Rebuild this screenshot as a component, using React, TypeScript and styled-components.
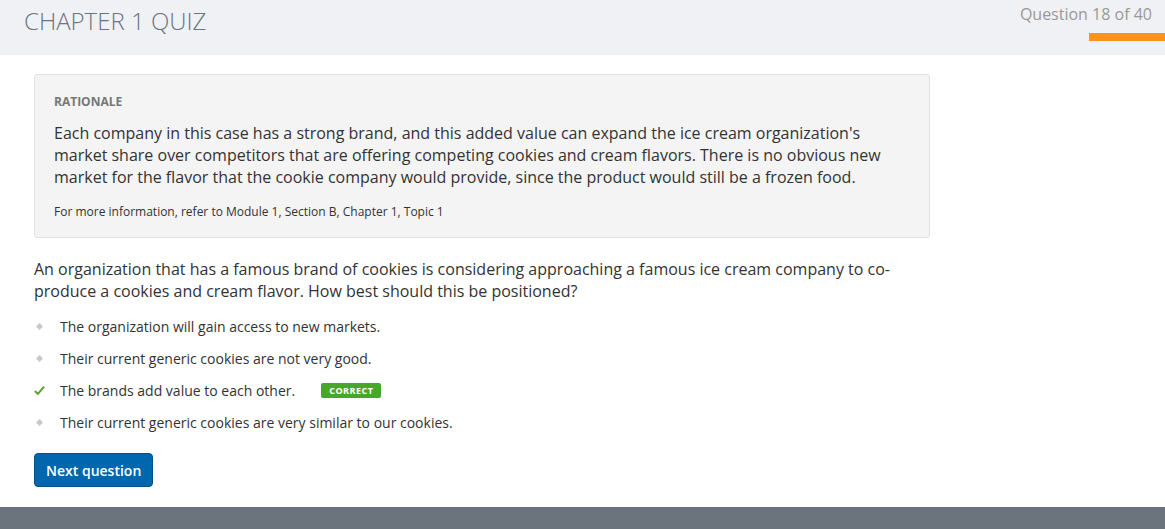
import React from "react"
import styled, { createGlobalStyle } from "styled-components"

const GlobalStyle = createGlobalStyle`
  html, body {
    margin: 0;
    padding: 0;
    background: #fff;
    font-family: "Open Sans", "Liberation Sans", sans-serif;
    color: #333;
  }
`

const Page = styled.div`
  display: flex;
  flex-direction: column;
  min-height: 529px;
`

const Header = styled.header`
  background-color: #f0f1f5;
  display: flex;
  height: 55px;
  justify-content: space-between;
  padding-left: 24px;
`

const Title = styled.h1`
  color: #6a7580;
  font-size: 24px;
  font-weight: 300;
  line-height: 1;
  margin: 9px 0 0;
`

const Progress = styled.div`
  align-items: flex-end;
  display: flex;
  flex-direction: column;
  padding-top: 3px;
`

const Counter = styled.span`
  color: #999;
  font-size: 16px;
  margin-right: 13px;
`

const ProgressBar = styled.div`
  background-color: #f7931e;
  height: 8px;
  margin-top: 8px;
  width: 76px;
`

const Main = styled.main`
  flex: 1;
  padding: 19px 34px 17px;
  width: 896px;
`

const Rationale = styled.section`
  background-color: #f4f4f4;
  border: 1px solid #e2e2e2;
  border-radius: 3px;
  padding: 19px 19px 17px;
`

const Label = styled.h3`
  color: #777;
  font-size: 12px;
  font-weight: 700;
  line-height: 16px;
  margin: 0 0 12px;
`

const Paragraph = styled.p`
  color: #333;
  font-size: 16px;
  line-height: 22px;
  margin: 0 0 16px;
`

const Note = styled.p`
  color: #333;
  font-size: 12px;
  line-height: 16px;
  margin: 0;
`

const Question = styled.p`
  font-size: 16px;
  line-height: 22px;
  margin: 20px 0 8px;
`

const Options = styled.ul`
  list-style: none;
  margin: 0;
  padding: 0;
`

const Option = styled.li`
  align-items: center;
  display: flex;
  font-size: 14px;
  height: 32px;
`

const Marker = styled.span`
  align-items: center;
  display: flex;
  justify-content: center;
  margin-right: 15px;
  width: 11px;
`

const Dot = styled.span`
  background-color: #c8c8c8;
  display: block;
  height: 5px;
  transform: rotate(45deg);
  width: 5px;
`

const Badge = styled.span`
  background-color: #46a72c;
  border-radius: 2px;
  color: #fff;
  font-size: 9px;
  font-weight: 700;
  letter-spacing: 0.5px;
  line-height: 15px;
  margin-left: 26px;
  padding: 0 8px;
`

const NextButton = styled.button`
  background-color: #0066ad;
  border: 1px solid #00508a;
  border-radius: 4px;
  color: #fff;
  cursor: pointer;
  font-family: inherit;
  font-size: 14px;
  font-weight: 600;
  height: 34px;
  margin-top: 15px;
  padding: 0 11px;
`

const Footer = styled.footer`
  background-color: #6b747c;
  height: 22px;
`

const options = [
  { text: "The organization will gain access to new markets.", correct: false },
  { text: "Their current generic cookies are not very good.", correct: false },
  { text: "The brands add value to each other.", correct: true },
  { text: "Their current generic cookies are very similar to our cookies.", correct: false },
]

const Check = () => (
  <svg width="12" height="11" viewBox="0 0 12 11">
    <path d="M1 6 L4.3 9.2 L11 1.2" fill="none" stroke="#5ca12a" strokeWidth="2.2" />
  </svg>
)

const App = () => {
  return (
    <Page>
      <GlobalStyle />
      <Header>
        <Title>CHAPTER 1 QUIZ</Title>
        <Progress>
          <Counter>Question 18 of 40</Counter>
          <ProgressBar />
        </Progress>
      </Header>
      <Main>
        <Rationale>
          <Label>RATIONALE</Label>
          <Paragraph>
            Each company in this case has a strong brand, and this added value can expand the ice cream
            organization's market share over competitors that are offering competing cookies and cream
            flavors. There is no obvious new market for the flavor that the cookie company would provide,
            since the product would still be a frozen food.
          </Paragraph>
          <Note>For more information, refer to Module 1, Section B, Chapter 1, Topic 1</Note>
        </Rationale>
        <Question>
          An organization that has a famous brand of cookies is considering approaching a famous ice cream
          company to co-produce a cookies and cream flavor. How best should this be positioned?
        </Question>
        <Options>
          {options.map(({ text, correct }) => (
            <Option key={text}>
              <Marker>{correct ? <Check /> : <Dot />}</Marker>
              {text}
              {correct && <Badge>CORRECT</Badge>}
            </Option>
          ))}
        </Options>
        <NextButton>Next question</NextButton>
      </Main>
      <Footer />
    </Page>
  )
}

export default App
